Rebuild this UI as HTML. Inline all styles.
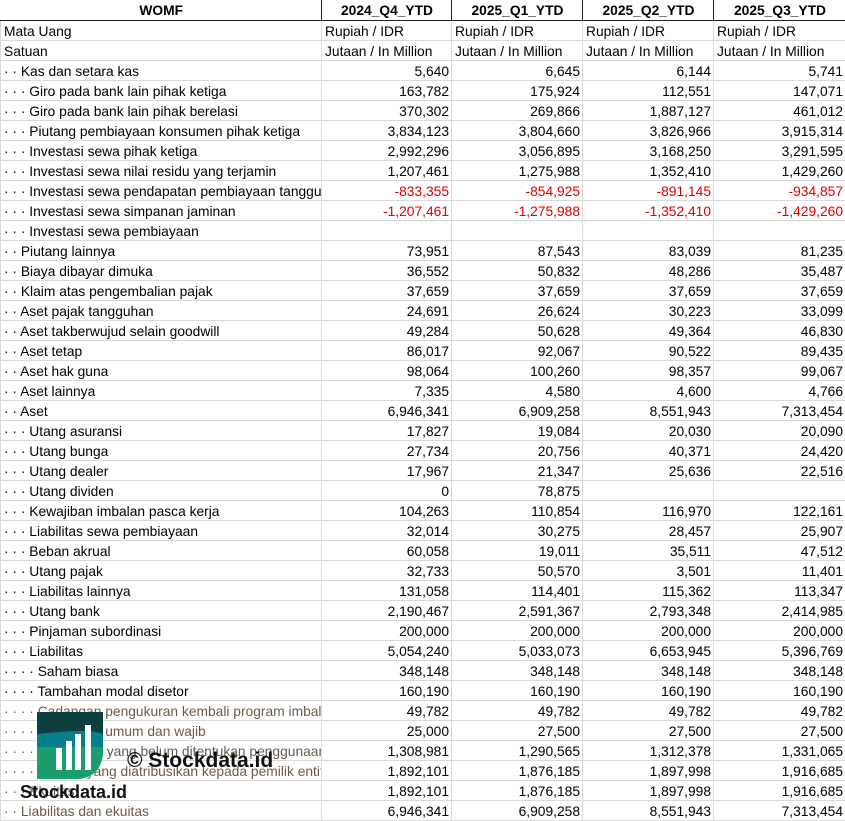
<!DOCTYPE html>
<html><head><meta charset="utf-8"><style>
body{margin:0;background:#fff;width:845px;height:821px;overflow:hidden;position:relative;font-family:"Liberation Sans",sans-serif;font-size:13.8px;color:#000}
table{border-collapse:collapse;table-layout:fixed;position:absolute;left:0;top:0;width:845px}
td{height:17px;padding:2px 2px 0 3px;border:1px solid #d9d9d9;white-space:nowrap;overflow:hidden;line-height:17px}
td.n{text-align:right}
tr.h td{font-weight:bold;text-align:center;border:1px solid #222;border-top:none;height:19px;line-height:19px;padding-top:1px}
tr.h td:first-child{border-left:none}
.r{color:#e00000}
.g td:first-child{color:#6b5b4b}
</style></head><body>
<table>
<colgroup><col style="width:321px"><col style="width:130px"><col style="width:131px"><col style="width:131px"><col style="width:132px"></colgroup>
<tr class="h"><td>WOMF</td><td>2024_Q4_YTD</td><td>2025_Q1_YTD</td><td>2025_Q2_YTD</td><td>2025_Q3_YTD</td></tr>
<tr><td>Mata Uang</td><td>Rupiah / IDR</td><td>Rupiah / IDR</td><td>Rupiah / IDR</td><td>Rupiah / IDR</td></tr>
<tr><td>Satuan</td><td>Jutaan / In Million</td><td>Jutaan / In Million</td><td>Jutaan / In Million</td><td>Jutaan / In Million</td></tr>
<tr><td>· · Kas dan setara kas</td><td class="n">5,640</td><td class="n">6,645</td><td class="n">6,144</td><td class="n">5,741</td></tr>
<tr><td>· · · Giro pada bank lain pihak ketiga</td><td class="n">163,782</td><td class="n">175,924</td><td class="n">112,551</td><td class="n">147,071</td></tr>
<tr><td>· · · Giro pada bank lain pihak berelasi</td><td class="n">370,302</td><td class="n">269,866</td><td class="n">1,887,127</td><td class="n">461,012</td></tr>
<tr><td>· · · Piutang pembiayaan konsumen pihak ketiga</td><td class="n">3,834,123</td><td class="n">3,804,660</td><td class="n">3,826,966</td><td class="n">3,915,314</td></tr>
<tr><td>· · · Investasi sewa pihak ketiga</td><td class="n">2,992,296</td><td class="n">3,056,895</td><td class="n">3,168,250</td><td class="n">3,291,595</td></tr>
<tr><td>· · · Investasi sewa nilai residu yang terjamin</td><td class="n">1,207,461</td><td class="n">1,275,988</td><td class="n">1,352,410</td><td class="n">1,429,260</td></tr>
<tr><td>· · · Investasi sewa pendapatan pembiayaan tangguhan</td><td class="n r">-833,355</td><td class="n r">-854,925</td><td class="n r">-891,145</td><td class="n r">-934,857</td></tr>
<tr><td>· · · Investasi sewa simpanan jaminan</td><td class="n r">-1,207,461</td><td class="n r">-1,275,988</td><td class="n r">-1,352,410</td><td class="n r">-1,429,260</td></tr>
<tr><td>· · · Investasi sewa pembiayaan</td><td></td><td></td><td></td><td></td></tr>
<tr><td>· · Piutang lainnya</td><td class="n">73,951</td><td class="n">87,543</td><td class="n">83,039</td><td class="n">81,235</td></tr>
<tr><td>· · Biaya dibayar dimuka</td><td class="n">36,552</td><td class="n">50,832</td><td class="n">48,286</td><td class="n">35,487</td></tr>
<tr><td>· · Klaim atas pengembalian pajak</td><td class="n">37,659</td><td class="n">37,659</td><td class="n">37,659</td><td class="n">37,659</td></tr>
<tr><td>· · Aset pajak tangguhan</td><td class="n">24,691</td><td class="n">26,624</td><td class="n">30,223</td><td class="n">33,099</td></tr>
<tr><td>· · Aset takberwujud selain goodwill</td><td class="n">49,284</td><td class="n">50,628</td><td class="n">49,364</td><td class="n">46,830</td></tr>
<tr><td>· · Aset tetap</td><td class="n">86,017</td><td class="n">92,067</td><td class="n">90,522</td><td class="n">89,435</td></tr>
<tr><td>· · Aset hak guna</td><td class="n">98,064</td><td class="n">100,260</td><td class="n">98,357</td><td class="n">99,067</td></tr>
<tr><td>· · Aset lainnya</td><td class="n">7,335</td><td class="n">4,580</td><td class="n">4,600</td><td class="n">4,766</td></tr>
<tr><td>· · Aset</td><td class="n">6,946,341</td><td class="n">6,909,258</td><td class="n">8,551,943</td><td class="n">7,313,454</td></tr>
<tr><td>· · · Utang asuransi</td><td class="n">17,827</td><td class="n">19,084</td><td class="n">20,030</td><td class="n">20,090</td></tr>
<tr><td>· · · Utang bunga</td><td class="n">27,734</td><td class="n">20,756</td><td class="n">40,371</td><td class="n">24,420</td></tr>
<tr><td>· · · Utang dealer</td><td class="n">17,967</td><td class="n">21,347</td><td class="n">25,636</td><td class="n">22,516</td></tr>
<tr><td>· · · Utang dividen</td><td class="n">0</td><td class="n">78,875</td><td></td><td></td></tr>
<tr><td>· · · Kewajiban imbalan pasca kerja</td><td class="n">104,263</td><td class="n">110,854</td><td class="n">116,970</td><td class="n">122,161</td></tr>
<tr><td>· · · Liabilitas sewa pembiayaan</td><td class="n">32,014</td><td class="n">30,275</td><td class="n">28,457</td><td class="n">25,907</td></tr>
<tr><td>· · · Beban akrual</td><td class="n">60,058</td><td class="n">19,011</td><td class="n">35,511</td><td class="n">47,512</td></tr>
<tr><td>· · · Utang pajak</td><td class="n">32,733</td><td class="n">50,570</td><td class="n">3,501</td><td class="n">11,401</td></tr>
<tr><td>· · · Liabilitas lainnya</td><td class="n">131,058</td><td class="n">114,401</td><td class="n">115,362</td><td class="n">113,347</td></tr>
<tr><td>· · · Utang bank</td><td class="n">2,190,467</td><td class="n">2,591,367</td><td class="n">2,793,348</td><td class="n">2,414,985</td></tr>
<tr><td>· · · Pinjaman subordinasi</td><td class="n">200,000</td><td class="n">200,000</td><td class="n">200,000</td><td class="n">200,000</td></tr>
<tr><td>· · · Liabilitas</td><td class="n">5,054,240</td><td class="n">5,033,073</td><td class="n">6,653,945</td><td class="n">5,396,769</td></tr>
<tr><td>· · · · Saham biasa</td><td class="n">348,148</td><td class="n">348,148</td><td class="n">348,148</td><td class="n">348,148</td></tr>
<tr><td>· · · · Tambahan modal disetor</td><td class="n">160,190</td><td class="n">160,190</td><td class="n">160,190</td><td class="n">160,190</td></tr>
<tr class="g"><td>· · · · Cadangan pengukuran kembali program imbalan</td><td class="n">49,782</td><td class="n">49,782</td><td class="n">49,782</td><td class="n">49,782</td></tr>
<tr class="g"><td>· · · · Cadangan umum dan wajib</td><td class="n">25,000</td><td class="n">27,500</td><td class="n">27,500</td><td class="n">27,500</td></tr>
<tr class="g"><td>· · · · Saldo laba yang belum ditentukan penggunaannya</td><td class="n">1,308,981</td><td class="n">1,290,565</td><td class="n">1,312,378</td><td class="n">1,331,065</td></tr>
<tr class="g"><td>· · · · Ekuitas yang diatribusikan kepada pemilik entitas</td><td class="n">1,892,101</td><td class="n">1,876,185</td><td class="n">1,897,998</td><td class="n">1,916,685</td></tr>
<tr class="g"><td>· · · Ekuitas</td><td class="n">1,892,101</td><td class="n">1,876,185</td><td class="n">1,897,998</td><td class="n">1,916,685</td></tr>
<tr class="g"><td>· · Liabilitas dan ekuitas</td><td class="n">6,946,341</td><td class="n">6,909,258</td><td class="n">8,551,943</td><td class="n">7,313,454</td></tr>
</table>
<svg style="position:absolute;left:37px;top:712px" width="66" height="67" viewBox="0 0 66 67">
<path d="M0 0H66V40C66 55 56 67 40 67H0Z" fill="#1a9e6e"/>
<path d="M0 0H66V35H0Z" fill="#0a7d8c"/>
<path d="M0 0H66V22C56 18 40 18 0 22Z" fill="#0d3f3f"/>
<rect x="19" y="36" width="6" height="22" fill="#fff"/>
<rect x="29" y="29" width="6" height="29" fill="#fff"/>
<rect x="38" y="22" width="6" height="36" fill="#fff"/>
<rect x="48" y="13" width="6" height="45" fill="#fff"/>
</svg>
<div style="position:absolute;left:127px;top:749px;font-weight:bold;font-size:21px;color:#111">© Stockdata.id</div>
<div style="position:absolute;left:20px;top:782px;font-weight:bold;font-size:18px;color:#111">Stockdata.id</div>
</body></html>
